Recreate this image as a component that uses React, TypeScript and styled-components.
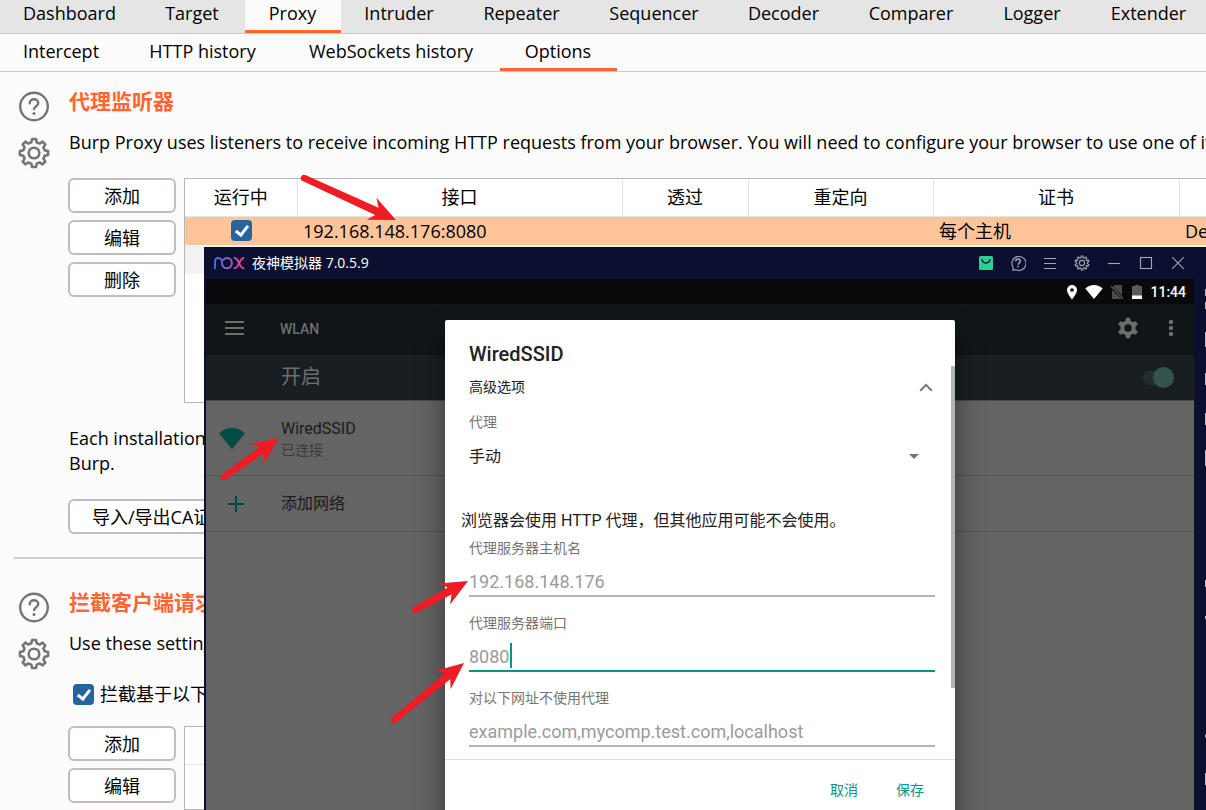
import React from "react";
import styled, { createGlobalStyle } from "styled-components";

const uiFont = '"Open Sans", "Noto Sans CJK SC", sans-serif';
const androidFont = 'Roboto, "Noto Sans CJK SC", sans-serif';
const orange = "#ff6633";
const navy = "#0c1030";
const teal = "#009688";

const GlobalStyle = createGlobalStyle`
  * { box-sizing: border-box; }
  body { margin: 0; background: #fbfbfb; }
  button, input, select { font: inherit; color: inherit; }
`;

const Page = styled.div`
  position: relative;
  display: flex;
  flex-direction: column;
  min-height: 100vh;
  overflow: hidden;
  background: #fbfbfb;
  color: #000;
  font: 18px/25px ${uiFont};
`;

/* ---------- tab bars ---------- */

const TabBar = styled.nav<{ $main?: boolean }>`
  display: flex;
  flex: none;
  height: ${(p) => (p.$main ? 34 : 38)}px;
  border-bottom: 1px solid #c8cccc;
  background: ${(p) => (p.$main ? "#e5e5e5" : "#fbfbfb")};
`;

const Tab = styled.button<{ $width: number; $active?: boolean; $main?: boolean }>`
  flex: none;
  width: ${(p) => p.$width}px;
  padding: 0 1px ${(p) => (p.$main ? 4 : 0)}px 0;
  border: 0;
  border-bottom: 3px solid ${(p) => (p.$active ? orange : "transparent")};
  background: ${(p) => (p.$active ? "#fbfbfb" : "transparent")};
  white-space: nowrap;
`;

const mainTabs: [string, number][] = [
  ["Dashboard", 140],
  ["Target", 105],
  ["Proxy", 96],
  ["Intruder", 117],
  ["Repeater", 128],
  ["Sequencer", 137],
  ["Decoder", 122],
  ["Comparer", 133],
  ["Logger", 109],
  ["Extender", 124],
];

const subTabs: [string, number][] = [
  ["Intercept", 123],
  ["HTTP history", 160],
  ["WebSockets history", 217],
  ["Options", 117],
];

/* ---------- option sections ---------- */

const Section = styled.section<{ $grow?: boolean }>`
  display: flex;
  gap: 19px;
  padding: ${(p) => (p.$grow ? 32 : 18)}px 0 0 18px;
  ${(p) => p.$grow && "flex: 1;"}
`;

const Gutter = styled.div`
  display: flex;
  flex: none;
  flex-direction: column;
  gap: 14px;
  width: 32px;
  padding-top: 1px;
`;

const GutterButton = styled.button`
  display: block;
  height: 32px;
  padding: 0;
  border: 0;
  background: none;
  color: #757575;
`;

const SectionBody = styled.div`
  display: flex;
  flex: 1;
  flex-direction: column;
  min-width: 0;
  margin-left: -1px;
`;

const Heading = styled.h2`
  margin: 0 0 17px 1px;
  color: ${orange};
  font-size: 21px;
  line-height: 23px;
`;

const Text = styled.p`
  margin: 0 0 0 1px;
  white-space: nowrap;
`;

const Note = styled(Text)`
  margin-top: 23px;
`;

const Columns = styled.div<{ $grow?: boolean }>`
  display: flex;
  gap: 8px;
  margin-top: ${(p) => (p.$grow ? 19 : 23)}px;
  ${(p) => p.$grow && "flex: 1;"}
`;

const ButtonStack = styled.div`
  display: flex;
  flex: none;
  flex-direction: column;
  gap: 7px;
  width: 108px;
`;

const Button = styled.button`
  height: 35px;
  padding: 0 22px;
  border: 2px solid #c2bcbd;
  border-radius: 6px;
  background: #fff;
  line-height: 24px;
  white-space: nowrap;
`;

const WideButton = styled(Button)`
  align-self: flex-start;
  margin: 23px 0;
`;

const TableFrame = styled.div`
  flex: 1;
  min-width: 0;
  min-height: 76px;
  overflow: hidden;
  border: 1px solid #b9b5b6;
  border-right: 0;
  background: #fff;
`;

const ListenerFrame = styled(TableFrame)`
  min-height: 225px;
`;

const Table = styled.table`
  width: 100%;
  border-collapse: collapse;
  table-layout: fixed;
`;

const HeadCell = styled.th<{ $width?: number }>`
  ${(p) => p.$width && `width: ${p.$width}px;`}
  height: 37px;
  padding: 1px 0 0;
  border-right: 1px solid #e3e3e3;
  border-bottom: 1px solid #e3e3e3;
  font-weight: 400;
  &:last-child { border-right: 0; }
`;

const BodyRow = styled.tr<{ $tone: string }>`
  height: 29px;
  background: ${(p) => p.$tone};
`;

const Cell = styled.td<{ $center?: boolean }>`
  padding: 0 6px;
  line-height: 28px;
  white-space: nowrap;
  ${(p) => p.$center && "text-align: center; line-height: 0;"}
`;

const CheckBox = styled.input`
  position: relative;
  flex: none;
  width: 21px;
  height: 21px;
  margin: 0;
  border-radius: 4px;
  background: #2664a0;
  appearance: none;
  vertical-align: middle;
  &:checked::after {
    content: "";
    position: absolute;
    left: 7px;
    top: 3px;
    width: 8px;
    height: 13px;
    border: solid #fff;
    border-width: 0 3px 3px 0;
    box-sizing: border-box;
    transform: rotate(38deg);
  }
`;

const CheckLabel = styled.label`
  display: flex;
  align-items: center;
  gap: 6px;
  margin: 26px 0 0 5px;
  white-space: nowrap;
`;

const Divider = styled.hr`
  flex: none;
  width: calc(100% - 14px);
  height: 2px;
  margin: 0 0 0 14px;
  border: 0;
  background: #d0d0d0;
`;

/* ---------- emulator window ---------- */

const Window = styled.section`
  position: absolute;
  top: 247px;
  right: -26px;
  bottom: 0;
  left: 204px;
  display: flex;
  flex-direction: column;
  padding-left: 2px;
  background: ${navy};
  font-family: ${androidFont};
`;

const TitleBar = styled.header`
  display: flex;
  flex: none;
  align-items: center;
  height: 32px;
  padding: 0 38px 0 7px;
  color: #fff;
  font: 14px/20px ${uiFont};
`;

const WindowTitle = styled.span`
  flex: 1;
  margin-left: 7px;
`;

const WindowButton = styled.button<{ $tint?: string }>`
  display: grid;
  place-items: center;
  width: 32px;
  height: 32px;
  padding: 0;
  border: 0;
  background: none;
  color: ${(p) => p.$tint ?? "#a4a6b4"};
`;

const WindowBody = styled.div`
  display: flex;
  flex: 1;
  min-height: 0;
`;

const Screen = styled.div`
  position: relative;
  display: flex;
  flex: 1;
  flex-direction: column;
  min-width: 0;
  overflow: hidden;
  background: #646464;
`;

const SideTools = styled.div`
  flex: none;
  width: 38px;
  padding-left: 11px;
  color: #b8b9c4;
`;

const SideTool = styled.button`
  display: block;
  width: 18px;
  height: 40px;
  padding: 0;
  border: 0;
  background: none;
`;

const StatusBar = styled.div`
  display: flex;
  flex: none;
  align-items: center;
  justify-content: flex-end;
  gap: 7px;
  height: 25px;
  padding: 1px 8px 0 0;
  background: #08090a;
  color: #fff;
  font-size: 14px;
  font-weight: 500;
`;

const AppBar = styled.header`
  display: flex;
  flex: none;
  align-items: center;
  height: 51px;
  padding: 0 17px 4px 18px;
  background: #101517;
  color: #6c6f70;
`;

const AppTitle = styled.h1`
  flex: 1;
  margin: 3px 0 0 34px;
  font-size: 14px;
  font-weight: 500;
`;

const IconButton = styled.button<{ $width: number }>`
  display: grid;
  place-items: center;
  width: ${(p) => p.$width}px;
  height: 24px;
  padding: 0;
  border: 0;
  background: none;
`;

const AppActions = styled.div`
  display: flex;
  gap: 25px;
`;

const SwitchBar = styled.label`
  display: flex;
  flex: none;
  align-items: center;
  justify-content: space-between;
  height: 46px;
  padding: 0 20px 0 75px;
  border-bottom: 1px solid #454a4b;
  background: #181e21;
  color: #6c6f70;
  font-size: 20px;
`;

const Switch = styled.input`
  position: relative;
  width: 31px;
  height: 14px;
  margin: 0;
  border-radius: 7px;
  background: #222e2f;
  appearance: none;
  &::after {
    content: "";
    position: absolute;
    top: -4px;
    right: 0;
    width: 21px;
    height: 21px;
    border-radius: 50%;
    background: #35534e;
  }
`;

const Networks = styled.ul`
  margin: 0;
  padding: 0;
  list-style: none;
`;

const Network = styled.li<{ $height: number }>`
  display: flex;
  align-items: center;
  height: ${(p) => p.$height}px;
  padding-top: 1px;
  border-bottom: 1px solid #535353;
  color: #1a1a1a;
  font-size: 16px;
  line-height: 22px;
`;

const NetworkIcon = styled.span<{ $inset: number }>`
  display: flex;
  width: 75px;
  padding-left: ${(p) => p.$inset}px;
  color: #004b43;
`;

const NetworkState = styled.div`
  color: #3c3c3c;
  font-size: 14px;
  line-height: 20px;
`;

/* ---------- dialog ---------- */

const DialogLayer = styled.div`
  position: absolute;
  inset: 41px 0 auto;
  display: flex;
  justify-content: center;
`;

const Dialog = styled.form`
  position: relative;
  width: 510px;
  padding-top: 20px;
  border-radius: 2px;
  background: #fff;
  box-shadow: 0 16px 30px rgba(0, 0, 0, 0.45);
  color: #212121;
`;

const Fields = styled.div`
  display: flex;
  flex-direction: column;
  padding: 0 20px 12px 24px;
`;

const DialogTitle = styled.h2`
  margin: 0;
  font-size: 20px;
  font-weight: 500;
  line-height: 28px;
`;

const Advanced = styled.button`
  display: flex;
  align-items: center;
  justify-content: space-between;
  height: 38px;
  margin-bottom: 6px;
  padding: 0 2px 0 0;
  border: 0;
  background: none;
  font-size: 14px;
`;

const Label = styled.label`
  color: #757575;
  font-size: 14px;
  line-height: 20px;
`;

const SelectWrap = styled.div`
  display: flex;
  align-items: center;
  height: 48px;
  margin-bottom: 29px;
  padding-right: 16px;
  color: #757575;
`;

const Select = styled.select`
  flex: 1;
  padding: 0;
  border: 0;
  background: none;
  color: #212121;
  font-size: 16px;
  appearance: none;
`;

const Warning = styled.p`
  margin: 0 0 5px -8px;
  font-size: 16px;
  line-height: 24px;
  white-space: nowrap;
`;

const Field = styled.div<{ $focused?: boolean }>`
  position: relative;
  display: flex;
  height: 39px;
  margin-bottom: 16px;
  border-bottom: 2px solid ${(p) => (p.$focused ? teal : "#b4b4b4")};
  &:last-child { margin-bottom: 0; }
`;

const Input = styled.input`
  flex: 1;
  padding: 10px 0 0;
  border: 0;
  outline: 0;
  background: none;
  color: #9b9b9b;
  font-size: 18px;
  line-height: 24px;
`;

const Caret = styled.span`
  position: absolute;
  bottom: 2px;
  left: 41px;
  width: 2px;
  height: 25px;
  background: ${teal};
`;

const Thumb = styled.div`
  position: absolute;
  top: 46px;
  right: 0;
  width: 4px;
  height: 322px;
  background: #b4b4b4;
`;

const Actions = styled.footer`
  display: flex;
  justify-content: flex-end;
  gap: 8px;
  padding: 11px 16px 24px;
  border-top: 1px solid #e0e0e0;
`;

const Action = styled.button`
  height: 38px;
  padding: 0 15px;
  border: 0;
  background: none;
  color: ${teal};
  font-size: 14px;
`;

const Annotations = styled.svg`
  position: absolute;
  top: 0;
  left: 0;
  pointer-events: none;
`;

/* ---------- icons ---------- */

const gearOutline = (cx: number, cy: number, outer: number, inner: number, teeth: number) => {
  const points: string[] = [];
  const step = (Math.PI * 2) / teeth;
  for (let i = 0; i < teeth; i++) {
    const a = i * step - Math.PI / 2;
    const at = (r: number, t: number) =>
      `${(cx + r * Math.cos(t)).toFixed(2)} ${(cy + r * Math.sin(t)).toFixed(2)}`;
    points.push(
      at(outer, a - step * 0.17),
      at(outer, a + step * 0.17),
      at(inner, a + step * 0.32),
      at(inner, a + step * 0.68)
    );
  }
  return `M${points.join("L")}Z`;
};

const HelpIcon = () => (
  <svg width="32" height="32" viewBox="0 0 32 32" fill="none" stroke="currentColor" strokeWidth="2.4" strokeLinecap="round">
    <circle cx="16" cy="15.5" r="13.8" />
    <path d="M11.7 12.3c0-2.6 1.9-4 4.3-4s4.3 1.5 4.3 3.8c0 3.1-4.2 3.1-4.2 6" />
    <circle cx="16" cy="22.6" r="1.5" fill="currentColor" stroke="none" />
  </svg>
);

const SettingsIcon = () => (
  <svg width="32" height="32" viewBox="0 0 32 32" fill="none" stroke="currentColor" strokeWidth="2.6" strokeLinejoin="round">
    <path d={gearOutline(16, 16, 14.2, 11, 8)} />
    <circle cx="16" cy="16" r="5.3" />
  </svg>
);

const NoxLogo = () => (
  <svg width="32" height="14" viewBox="0 0 32 14" fill="none" strokeWidth="1.9" strokeLinecap="round">
    <defs>
      <linearGradient id="nox" gradientUnits="userSpaceOnUse" x1="0" y1="0" x2="32" y2="0">
        <stop offset="0" stopColor="#3f6df0" />
        <stop offset="0.45" stopColor="#8b5bd8" />
        <stop offset="0.8" stopColor="#ea3fa0" />
        <stop offset="1" stopColor="#f2389a" />
      </linearGradient>
    </defs>
    <g stroke="url(#nox)">
      <path d="M2 12.200V6.200C2 3.600 3.400 2 5.400 2s3.500 1.600 3.500 4.200c0 3.800 2 6 5 6 2.900 0 5-2.100 5-5.100S16.800 2 14.200 2c-1.700 0-3 .700-3.900 1.900" />
      <path d="M21.500 2c4.700.200 4.700 10.200 9 10.200" />
      <path d="M30.500 2c-4.300.200-4.300 10.200-9 10.200" />
    </g>
  </svg>
);

const WifiIcon = ({ width, height }: { width: number; height: number }) => (
  <svg width={width} height={height} viewBox="0 0 26 21" fill="currentColor">
    <path d="M13 21 0 5.200C3.500 2 8 0 13 0s9.500 2 13 5.200Z" />
  </svg>
);

const windowIcons: { name: string; tint?: string; art: React.ReactNode }[] = [
  {
    name: "应用中心",
    tint: "#2bcf95",
    art: (
      <>
        <rect x="1" y="1" width="14" height="14" rx="1.500" fill="currentColor" stroke="none" />
        <path d="M4 4.200c.500 5 7.500 5 8 0" stroke={navy} strokeWidth="1.400" />
      </>
    ),
  },
  {
    name: "帮助",
    art: (
      <>
        <path d="M3 15.200v-3A7 7 0 1 1 5.500 14.600Z" />
        <path d="M5.800 6.200c0-3 4.500-3 4.500 0 0 1.600-2.200 1.700-2.200 3.600" strokeWidth="1.500" />
        <path d="M8.100 10.800v1.500" strokeWidth="1.500" />
      </>
    ),
  },
  { name: "菜单", art: <path d="M2 3.500h12M2 8.500h12M2 13.500h12" /> },
  {
    name: "设置",
    art: (
      <>
        <path d={gearOutline(8, 8, 7, 5.4, 10)} />
        <circle cx="8" cy="8" r="2.600" />
      </>
    ),
  },
  { name: "最小化", art: <path d="M2 8.500h12" /> },
  { name: "最大化", art: <rect x="2.500" y="2.500" width="11" height="11" /> },
  { name: "关闭", art: <path d="m2.200 2.200 11.600 11.600m0-11.600-11.600 11.600" /> },
];

const sideIcons: React.ReactNode[] = [
  <path d="M0 17V11h6M0 23v6h6M12 11h6v6M12 29h6v-6" />,
  <rect x="0" y="14" width="16" height="13" />,
  <rect x="0" y="15" width="16" height="10" />,
  <rect x="0" y="15" width="16" height="10" />,
  <rect x="0" y="12" width="16" height="14" />,
  <circle cx="9" cy="20" r="7" />,
  <circle cx="9" cy="20" r="7" />,
  <path d="M0 21v6h16v-6M8 12v10" />,
  <path d="M0 18h16M0 18l8 8 8-8" />,
  <circle cx="9" cy="20" r="7" />,
  <circle cx="9" cy="20" r="7" />,
  <path d="m0 17 8-6v12Z" />,
  <rect x="0" y="15" width="16" height="10" />,
];

const Arrow = ({ from, to }: { from: [number, number]; to: [number, number] }) => {
  const length = Math.hypot(to[0] - from[0], to[1] - from[1]);
  const angle = (Math.atan2(to[1] - from[1], to[0] - from[0]) * 180) / Math.PI;
  const neck = length - 21;
  return (
    <path
      transform={`translate(${from[0]} ${from[1]}) rotate(${angle})`}
      d={`M0-3.200L${neck}-4L${length - 27}-12L${length} 0L${length - 27} 12L${neck} 4L0 3.200A3.200 3.200 0 0 1 0-3.200Z`}
      fill="#ee1c24"
    />
  );
};

const SectionGutter = () => (
  <Gutter>
    <GutterButton type="button" aria-label="Help"><HelpIcon /></GutterButton>
    <GutterButton type="button" aria-label="Settings"><SettingsIcon /></GutterButton>
  </Gutter>
);

export default function App() {
  return (
    <Page>
      <GlobalStyle />
      <TabBar $main>
        {mainTabs.map(([label, width]) => (
          <Tab key={label} type="button" $main $width={width} $active={label === "Proxy"}>{label}</Tab>
        ))}
      </TabBar>
      <TabBar>
        {subTabs.map(([label, width]) => (
          <Tab key={label} type="button" $width={width} $active={label === "Options"}>{label}</Tab>
        ))}
      </TabBar>

      <Section>
        <SectionGutter />
        <SectionBody>
          <Heading>代理监听器</Heading>
          <Text>
            Burp Proxy uses listeners to receive incoming HTTP requests from your browser. You will need to configure your browser to use one of its listeners as its proxy server.
          </Text>
          <Columns>
            <ButtonStack>
              <Button type="button">添加</Button>
              <Button type="button">编辑</Button>
              <Button type="button">删除</Button>
            </ButtonStack>
            <ListenerFrame>
              <Table>
                <thead>
                  <tr>
                    <HeadCell $width={112}>运行中</HeadCell>
                    <HeadCell $width={325}>接口</HeadCell>
                    <HeadCell $width={126}>透过</HeadCell>
                    <HeadCell $width={185}>重定向</HeadCell>
                    <HeadCell $width={246}>证书</HeadCell>
                    <HeadCell />
                  </tr>
                </thead>
                <tbody>
                  <BodyRow $tone="#ffc599">
                    <Cell $center><CheckBox type="checkbox" defaultChecked aria-label="运行中" /></Cell>
                    <Cell>192.168.148.176:8080</Cell>
                    <Cell />
                    <Cell />
                    <Cell>每个主机</Cell>
                    <Cell>Default</Cell>
                  </BodyRow>
                  <BodyRow $tone="#f2f2f2"><Cell colSpan={6} /></BodyRow>
                </tbody>
              </Table>
            </ListenerFrame>
          </Columns>
          <Note>
            Each installation of
            <br />
            Burp.
          </Note>
          <WideButton type="button">导入/导出CA证书</WideButton>
        </SectionBody>
      </Section>
      <Divider />
      <Section $grow>
        <SectionGutter />
        <SectionBody>
          <Heading>拦截客户端请求</Heading>
          <Text>Use these settings</Text>
          <CheckLabel>
            <CheckBox type="checkbox" defaultChecked />
            拦截基于以下
          </CheckLabel>
          <Columns $grow>
            <ButtonStack>
              <Button type="button">添加</Button>
              <Button type="button">编辑</Button>
            </ButtonStack>
            <TableFrame>
              <Table>
                <thead><tr><HeadCell /></tr></thead>
                <tbody>
                  <BodyRow $tone="#fff"><Cell /></BodyRow>
                </tbody>
              </Table>
            </TableFrame>
          </Columns>
        </SectionBody>
      </Section>

      <Window>
        <TitleBar>
          <NoxLogo />
          <WindowTitle>夜神模拟器 7.0.5.9</WindowTitle>
          {windowIcons.map(({ name, tint, art }) => (
            <WindowButton key={name} type="button" aria-label={name} $tint={tint}>
              <svg width="16" height="16" viewBox="0 0 16 16" fill="none" stroke="currentColor" strokeWidth="1.100">{art}</svg>
            </WindowButton>
          ))}
        </TitleBar>
        <WindowBody>
          <Screen>
            <StatusBar>
              <svg width="12" height="16" viewBox="0 0 12 16" fill="currentColor">
                <path fillRule="evenodd" d="M6 1a5 5 0 0 1 5 5c0 3.500-5 9.500-5 9.500S1 9.500 1 6a5 5 0 0 1 5-5Zm0 3.200a1.800 1.800 0 1 0 0 3.600 1.800 1.800 0 0 0 0-3.600Z" />
              </svg>
              <WifiIcon width={18} height={14} />
              <svg width="14" height="16" viewBox="0 0 14 16">
                <path d="M5 1h7v14H2V4Z" fill="#4c4c4c" />
                <path d="m0 2 14 13" stroke="#08090a" strokeWidth="3" />
                <path d="m1 2 12 12.500" stroke="#5c5c5c" strokeWidth="1.200" />
              </svg>
              <svg width="12" height="16" viewBox="0 0 12 16">
                <path d="M4 1h4v1h3v10H1V2h3Z" fill="#5a5a5a" />
                <path d="M1 11.500h10V15H1Z" fill="#fff" />
              </svg>
              <span>11:44</span>
            </StatusBar>
            <AppBar>
              <IconButton type="button" aria-label="菜单" $width={22}>
                <svg width="20" height="14" viewBox="0 0 20 14" stroke="currentColor" strokeWidth="2"><path d="M0 1h19M0 7h19M0 13h19" /></svg>
              </IconButton>
              <AppTitle>WLAN</AppTitle>
              <AppActions>
                <IconButton type="button" aria-label="设置" $width={24}>
                  <svg width="22" height="22" viewBox="0 0 22 22" fill="currentColor">
                    <path fillRule="evenodd" d={`${gearOutline(11, 11, 10.4, 7.6, 6)}M11 7.300a3.700 3.700 0 1 0 0 7.400 3.700 3.700 0 0 0 0-7.400Z`} />
                  </svg>
                </IconButton>
                <IconButton type="button" aria-label="更多" $width={12}>
                  <svg width="6" height="18" viewBox="0 0 6 18" fill="currentColor">
                    <circle cx="3" cy="3" r="2.200" />
                    <circle cx="3" cy="9" r="2.200" />
                    <circle cx="3" cy="15" r="2.200" />
                  </svg>
                </IconButton>
              </AppActions>
            </AppBar>
            <SwitchBar>
              开启
              <Switch type="checkbox" role="switch" defaultChecked />
            </SwitchBar>
            <Networks>
              <Network $height={75}>
                <NetworkIcon $inset={13}><WifiIcon width={26} height={21} /></NetworkIcon>
                <div>
                  WiredSSID
                  <NetworkState>已连接</NetworkState>
                </div>
              </Network>
              <Network $height={56}>
                <NetworkIcon $inset={22}>
                  <svg width="16" height="16" viewBox="0 0 16 16" stroke="currentColor" strokeWidth="2"><path d="M8 0v16M0 8h16" /></svg>
                </NetworkIcon>
                添加网络
              </Network>
            </Networks>

            <DialogLayer>
              <Dialog>
                <Fields>
                  <DialogTitle>WiredSSID</DialogTitle>
                  <Advanced type="button">
                    高级选项
                    <svg width="14" height="9" viewBox="0 0 14 9" fill="none" stroke="#757575" strokeWidth="2"><path d="m1.200 7.700 5.800-5.800 5.800 5.800" /></svg>
                  </Advanced>
                  <Label htmlFor="proxy-mode">代理</Label>
                  <SelectWrap>
                    <Select id="proxy-mode" defaultValue="manual">
                      <option value="manual">手动</option>
                    </Select>
                    <svg width="10" height="5" viewBox="0 0 10 5" fill="currentColor"><path d="M0 0h10L5 5Z" /></svg>
                  </SelectWrap>
                  <Warning>浏览器会使用 HTTP 代理，但其他应用可能不会使用。</Warning>
                  <Label htmlFor="proxy-host">代理服务器主机名</Label>
                  <Field>
                    <Input id="proxy-host" defaultValue="192.168.148.176" />
                  </Field>
                  <Label htmlFor="proxy-port">代理服务器端口</Label>
                  <Field $focused>
                    <Input id="proxy-port" defaultValue="8080" />
                    <Caret />
                  </Field>
                  <Label htmlFor="proxy-bypass">对以下网址不使用代理</Label>
                  <Field>
                    <Input id="proxy-bypass" defaultValue="example.com,mycomp.test.com,localhost" />
                  </Field>
                </Fields>
                <Thumb />
                <Actions>
                  <Action type="button">取消</Action>
                  <Action type="button">保存</Action>
                </Actions>
              </Dialog>
            </DialogLayer>
          </Screen>
          <SideTools>
            {sideIcons.map((art, i) => (
              <SideTool key={i} type="button" aria-label={`工具 ${i + 1}`}>
                <svg width="18" height="40" viewBox="0 0 18 40" fill="none" stroke="currentColor" strokeWidth="2">{art}</svg>
              </SideTool>
            ))}
          </SideTools>
        </WindowBody>
      </Window>

      <Annotations width="1206" height="810" viewBox="0 0 1206 810" aria-hidden="true">
        <Arrow from={[304, 178]} to={[396, 220]} />
        <Arrow from={[224, 477]} to={[279, 438]} />
        <Arrow from={[415, 610]} to={[468, 581]} />
        <Arrow from={[394, 720]} to={[464, 663]} />
      </Annotations>
    </Page>
  );
}
